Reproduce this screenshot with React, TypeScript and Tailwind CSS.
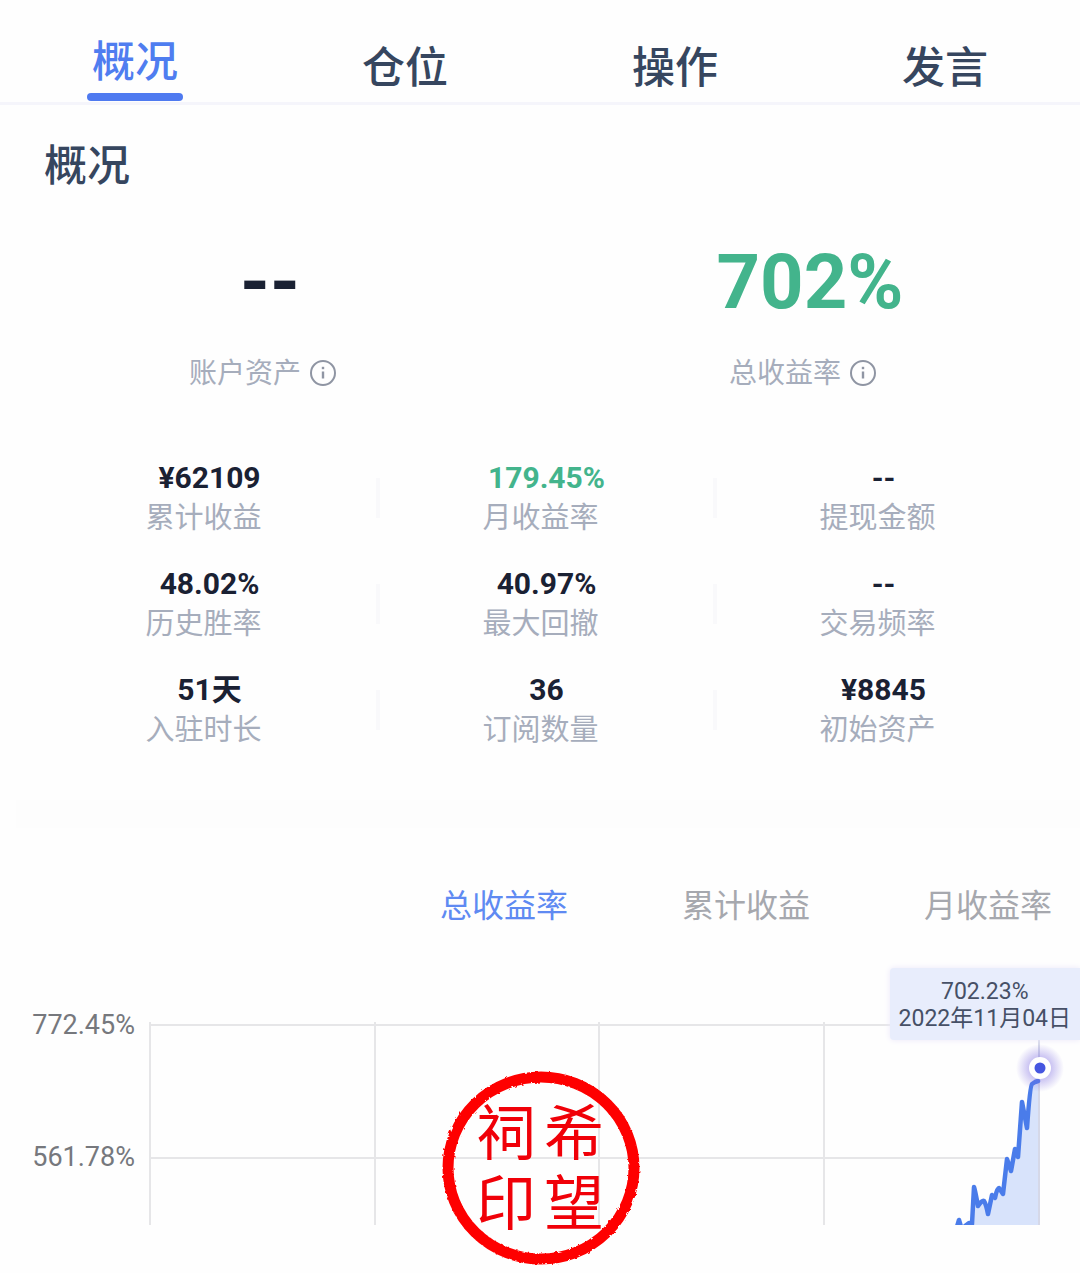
import React from "react";
import clsx from "clsx";

const tabs = ["概况", "仓位", "操作", "发言"];

const stats = [
  { value: "¥62109", label: "累计收益" },
  { value: "179.45%", label: "月收益率", up: true },
  { value: "--", label: "提现金额" },
  { value: "48.02%", label: "历史胜率" },
  { value: "40.97%", label: "最大回撤" },
  { value: "--", label: "交易频率" },
  { value: "51天", label: "入驻时长" },
  { value: "36", label: "订阅数量" },
  { value: "¥8845", label: "初始资产" },
];

const chartTabs = ["总收益率", "累计收益", "月收益率"];

const LINE =
  "M956 262 L959 252 L962 262 M965 258 L969 255 L972 256 L974 219 Q975 222 978 238 Q982 232 984 233 Q986 236 988 246 L992 227 L995 230 Q997 220 999 220 L1003 226 L1007 191 L1011 203 L1015 181 L1018 189 L1022 134 L1027 160 Q1030 118 1032 116 L1035 114 L1038 113";
const AREA =
  "M972 257 L974 219 L978 238 L984 233 L988 246 L992 227 L995 230 L999 220 L1003 226 L1007 191 L1011 203 L1015 181 L1018 189 L1022 134 L1027 160 L1032 118 L1040 112 L1040 257 Z";

const InfoIcon = () => (
  <svg width="28" height="28" viewBox="0 0 28 28" fill="none" aria-hidden="true">
    <circle cx="14" cy="13" r="12" stroke="#8f95a3" strokeWidth="2" />
    <path d="M14 11.5V18.5" stroke="#8f95a3" strokeWidth="2.4" />
    <path d="M14 6.8V9.2" stroke="#8f95a3" strokeWidth="2.4" />
  </svg>
);

const Summary = ({ value, label, up }: { value: string; label: string; up?: boolean }) => (
  <div className="flex flex-col items-center">
    <p
      className={clsx(
        "text-[76px] leading-[76px] font-bold",
        up ? "text-[#43b48c]" : "text-[#1a2133]"
      )}
    >
      {value}
    </p>
    <div className="mt-[34px] flex items-center gap-2 pr-[14px] text-[28px] leading-10 text-[#a6adbc]">
      <span>{label}</span>
      <button type="button" aria-label={`${label}说明`}>
        <InfoIcon />
      </button>
    </div>
  </div>
);

const Chart = () => (
  <svg viewBox="0 0 1080 305" className="block w-full" role="img" aria-label="总收益率走势">
    <defs>
      <clipPath id="plot">
        <rect x="149" y="0" width="931" height="257" />
      </clipPath>
      <radialGradient id="glow">
        <stop offset="45%" stopColor="#7a68e0" stopOpacity="0.4" />
        <stop offset="100%" stopColor="#7a68e0" stopOpacity="0" />
      </radialGradient>
    </defs>
    <g fill="#76787d" fontSize="27">
      <text x="135" y="66" textAnchor="end">772.45%</text>
      <text x="135" y="198" textAnchor="end">561.78%</text>
    </g>
    <g stroke="#e6e6e8" strokeWidth="2">
      <path d="M151 57H1039" />
      <path d="M151 190H1006" />
      <path d="M150 54V257" />
      <path d="M375 54V257" />
      <path d="M599 54V257" />
      <path d="M824 54V257" />
    </g>
    <path d={AREA} fill="#d8e3fb" />
    <path d="M1039 57V257" stroke="#d5d8e8" strokeWidth="2" />
    <path
      d={LINE}
      clipPath="url(#plot)"
      fill="none"
      stroke="#4a7cea"
      strokeWidth="4.5"
      strokeLinejoin="round"
      strokeLinecap="round"
    />
    <circle cx="1040" cy="100" r="24" fill="url(#glow)" />
    <circle cx="1040" cy="100" r="11" fill="#fff" />
    <circle cx="1040" cy="100" r="5.5" fill="#4656e0" />
  </svg>
);

const Stamp = () => (
  <svg width="204" height="198" viewBox="0 0 204 198" role="img" aria-label="祠希印望">
    <defs>
      <filter id="rough" x="-5%" y="-5%" width="110%" height="110%">
        <feTurbulence type="fractalNoise" baseFrequency="0.3" numOctaves="2" seed="4" />
        <feDisplacementMap in="SourceGraphic" scale="3" />
      </filter>
    </defs>
    <ellipse
      cx="103"
      cy="100"
      rx="93"
      ry="91"
      fill="none"
      stroke="#fe0000"
      strokeWidth="11"
      filter="url(#rough)"
    />
    <g fill="#f00008" fontSize="60" textAnchor="middle">
      <text x="68" y="87">祠</text>
      <text x="136" y="87">希</text>
      <text x="68" y="157">印</text>
      <text x="136" y="157">望</text>
    </g>
  </svg>
);

const App = () => {
  return (
    <div className="min-h-screen bg-[#fefefe] font-[Roboto,'Noto_Sans_CJK_SC',sans-serif]">
      <nav className="grid grid-cols-4 border-b-3 border-[#f5f5fb]">
        {tabs.map((tab, i) => (
          <button
            key={tab}
            type="button"
            className={clsx(
              "flex h-[102px] flex-col items-center justify-end text-[43px] leading-[56px] font-medium",
              i === 0 ? "pb-px text-[#4f7df0]" : "pb-[6px] text-[#36465f]"
            )}
          >
            {tab}
            {i === 0 && <span className="mt-[3px] h-2 w-24 rounded-full bg-[#4f7af0]" />}
          </button>
        ))}
      </nav>

      {/* Overview */}
      <section className="pt-[31px] pb-[50px]">
        <h2 className="px-11 text-[43px] leading-[60px] font-medium text-[#36465f]">概况</h2>
        <div className="mt-12 grid grid-cols-2">
          <Summary value="--" label="账户资产" />
          <Summary value="702%" label="总收益率" up />
        </div>
        <div className="mt-16 grid grid-cols-3 gap-y-[26px] pr-[26px] pl-[43px]">
          {stats.map((stat, i) => (
            <div key={stat.label} className="flex items-center">
              <div className="flex flex-1 flex-col items-center leading-10">
                <p
                  className={clsx(
                    "text-[30px] font-bold",
                    stat.up ? "text-[#43b48c]" : "text-[#1a2133]"
                  )}
                >
                  {stat.value}
                </p>
                <p className="pr-3 text-[29px] text-[#a6adbc]">{stat.label}</p>
              </div>
              <div className={clsx("h-10 w-1", i % 3 < 2 && "bg-[#f9f9fb]")} />
            </div>
          ))}
        </div>
      </section>

      <div className="ml-4 h-7 bg-[#fdfdfd]" />

      {/* Chart */}
      <section className="pt-[54px]">
        <div className="flex justify-end gap-[114px] pr-7 text-[32px] leading-12">
          {chartTabs.map((tab, i) => (
            <button
              key={tab}
              type="button"
              className={i === 0 ? "text-[#5f8af2]" : "text-[#a6a8ae]"}
            >
              {tab}
            </button>
          ))}
        </div>
        <div className="relative mt-[38px]">
          <Chart />
          <div className="absolute top-0 right-0 rounded-l-sm bg-[#e8edfc] px-[9px] pt-[10px] pb-2 text-center text-[23px] leading-[27px] text-[#465066] shadow-[0_0_6px_#ece8fa]">
            <p>702.23%</p>
            <p>2022年11月04日</p>
          </div>
          <div className="absolute top-[100px] left-1/2 -translate-x-1/2">
            <Stamp />
          </div>
        </div>
      </section>
    </div>
  );
};

export default App;
